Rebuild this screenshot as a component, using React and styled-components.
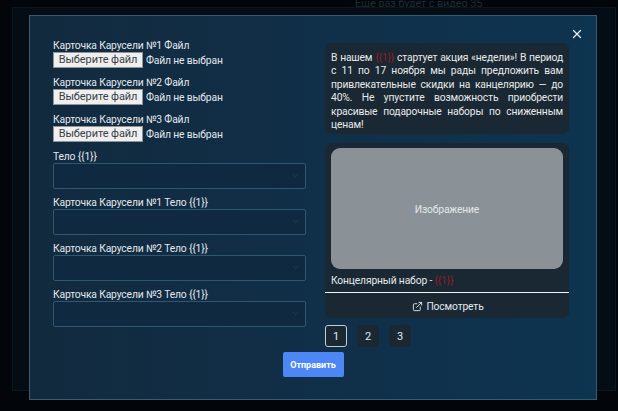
import React from 'react';
import styled, { createGlobalStyle } from 'styled-components';
import { ExternalLink, ChevronDown, X } from 'lucide-react';

const GlobalStyle = createGlobalStyle`
	html, body {
		margin: 0;
		height: 100%;
		background: #02060a;
		overflow: hidden;
	}
	* {
		box-sizing: border-box;
	}
`;

const Page = styled.div`
	position: relative;
	display: flex;
	flex-direction: column;
	width: 618px;
	height: 411px;
	padding: 0 2px 20px 12px;
	background: #02060a;
	font-family: 'Roboto', 'Noto Sans', sans-serif;
	font-size: 10.3px;
	letter-spacing: -0.15px;
`;

const BackTitle = styled.div`
	height: 7px;
	padding-left: 343px;
	color: #1d2c38;
	font-size: 11px;
	line-height: 8px;
	white-space: nowrap;
`;

const BackPanel = styled.div`
	flex: 1;
	background: #050d14;
	border: 1px solid #0b161e;
`;

const Modal = styled.div`
	position: absolute;
	top: 15px;
	left: 29px;
	width: 568px;
	height: 385px;
	padding: 23px 28px 0 23px;
	background: linear-gradient(90deg, #122a3e 0%, #10304a 60%, #0d3450 100%);
	border: 1px solid #3a5a70;
	color: #e3e8ec;
`;

const CloseButton = styled.button`
	position: absolute;
	top: 11px;
	right: 12px;
	display: flex;
	padding: 0;
	border: 0;
	background: none;
	color: #e8edf0;
`;

const Columns = styled.div`
	display: grid;
	grid-template-columns: 253px 244px;
	column-gap: 19px;
`;

const LeftColumn = styled.div`
	display: flex;
	flex-direction: column;
`;

const RightColumn = styled.div`
	display: flex;
	flex-direction: column;
	padding-top: 4px;
`;

const FileField = styled.div`
	display: flex;
	flex-direction: column;
	height: 37px;
`;

const Label = styled.label`
	line-height: 13px;
	white-space: nowrap;
`;

const FileRow = styled.div`
	display: flex;
	align-items: center;
	gap: 3px;
`;

const FileButton = styled.button`
	width: 90px;
	height: 16px;
	padding: 0;
	border: 1px solid #8d949a;
	background: #efefef;
	color: #3a3f44;
	font-family: inherit;
	font-size: 11px;
	letter-spacing: -0.1px;
	line-height: 14px;
`;

const BodyField = styled.div`
	display: flex;
	flex-direction: column;
	height: 46px;
`;

const InputWrap = styled.div`
	position: relative;
	height: 26px;
	color: #1f4159;
`;

const Input = styled.input`
	width: 100%;
	height: 100%;
	background: #0f2a40;
	border: 1px solid #2f5870;
	border-radius: 2px;
	outline: none;
`;

const Chevron = styled(ChevronDown)`
	position: absolute;
	top: 8px;
	right: 6px;
`;

const Bubble = styled.div`
	padding: 8px 6px 3px;
	background: #1a2833;
	border-radius: 6px;
	line-height: 13.4px;
	text-align: justify;
	color: #e6eaed;
`;

const Variable = styled.span`
	color: #8e1f26;
`;

const Card = styled.div`
	margin-top: 9px;
	background: #1a2833;
	border-radius: 6px;
	padding-top: 5px;
`;

const ImageBox = styled.div`
	display: flex;
	align-items: center;
	justify-content: center;
	height: 121px;
	margin: 0 6px;
	padding-top: 2px;
	background: #8a9298;
	border-radius: 9px;
	color: #e4e7e9;
`;

const Caption = styled.div`
	padding: 5px 6px 4px;
	line-height: 14px;
	border-bottom: 1.5px solid #f2f4f5;
`;

const LinkRow = styled.div`
	display: flex;
	align-items: center;
	justify-content: center;
	gap: 3px;
	height: 25px;
	padding: 1px 0 0 2px;
`;

const Pagination = styled.div`
	display: flex;
	gap: 10px;
	margin-top: 7px;
`;

const PageButton = styled.button`
	width: 22px;
	height: 22px;
	padding: 0;
	background: #1a2833;
	border: 1px solid ${(props) => (props.$active ? '#c2ccd2' : '#1a2833')};
	border-radius: 3px;
	color: #e3e8ec;
	font-family: inherit;
	font-size: 11px;
`;

const Footer = styled.div`
	display: flex;
	justify-content: center;
	margin-top: 5px;
`;

const SendButton = styled.button`
	width: 61px;
	height: 25px;
	margin-left: 5px;
	padding: 0;
	border: 0;
	border-radius: 2px;
	background: #4c87f5;
	color: #fff;
	font-family: inherit;
	font-size: 9px;
	font-weight: 700;
`;

const fileFields = ['Карточка Карусели №1 Файл', 'Карточка Карусели №2 Файл', 'Карточка Карусели №3 Файл'];
const bodyFields = ['Тело {{1}}', 'Карточка Карусели №1 Тело {{1}}', 'Карточка Карусели №2 Тело {{1}}', 'Карточка Карусели №3 Тело {{1}}'];

export default function App() {
	return (
		<Page>
			<GlobalStyle />
			<BackTitle>Еще раз будет с видео 35</BackTitle>
			<BackPanel />
			<Modal>
				<CloseButton>
					<X size={14} strokeWidth={2.2} />
				</CloseButton>
				<Columns>
					<LeftColumn>
						{fileFields.map((label) => (
							<FileField key={label}>
								<Label>{label}</Label>
								<FileRow>
									<FileButton>Выберите файл</FileButton>
									Файл не выбран
								</FileRow>
							</FileField>
						))}
						{bodyFields.map((label) => (
							<BodyField key={label}>
								<Label>{label}</Label>
								<InputWrap>
									<Input />
									<Chevron size={9} />
								</InputWrap>
							</BodyField>
						))}
					</LeftColumn>
					<RightColumn>
						<Bubble>
							В нашем <Variable>{'{{1}}'}</Variable> стартует акция «недели»! В период с 11 по 17 ноября мы рады предложить вам привлекательные скидки на канцелярию — до 40%. Не упустите возможность приобрести красивые подарочные наборы по сниженным ценам!
						</Bubble>
						<Card>
							<ImageBox>Изображение</ImageBox>
							<Caption>
								Концелярный набор - <Variable>{'{{1}}'}</Variable>
							</Caption>
							<LinkRow>
								<ExternalLink size={11} />
								Посмотреть
							</LinkRow>
						</Card>
						<Pagination>
							<PageButton $active>1</PageButton>
							<PageButton>2</PageButton>
							<PageButton>3</PageButton>
						</Pagination>
					</RightColumn>
				</Columns>
				<Footer>
					<SendButton>Отправить</SendButton>
				</Footer>
			</Modal>
		</Page>
	);
}
